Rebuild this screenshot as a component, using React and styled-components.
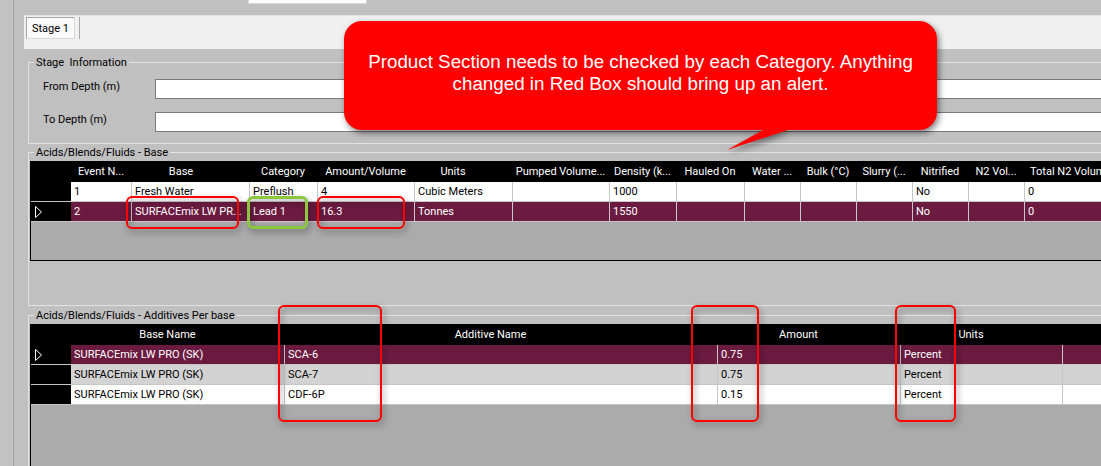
import React from 'react';
import styled, { createGlobalStyle } from 'styled-components';

const GlobalStyle = createGlobalStyle`
  html, body { margin: 0; padding: 0; background: #c0c0c0; }
  body { font-family: Roboto, "Liberation Sans", Arial, sans-serif; font-size: 11px; color: #000; }
  * { box-sizing: border-box; }
`;

const Screen = styled.div`
  position: relative;
  width: 1101px;
  height: 466px;
  overflow: hidden;
  display: flex;
  background: #c0c0c0;
`;

const Rail = styled.div`
  flex: none;
  width: 14px;
  background: #c3c3c3;
  border-right: 1px solid #a2a2a2;
`;

const Gutter = styled.div`
  flex: none;
  width: 10px;
`;

const Main = styled.div`
  flex: 1;
  min-width: 0;
  display: flex;
  flex-direction: column;
  overflow: hidden;
`;

const TopBar = styled.div`
  flex: none;
  height: 16px;
  padding-left: 224px;
  border-bottom: 1px solid #e4e4e4;
`;

const TopField = styled.div`
  width: 119px;
  height: 4px;
  background: #fff;
  border: 1px solid #d6d6d6;
  border-top: none;
`;

const TabStrip = styled.div`
  flex: none;
  height: 33px;
  background: #f0f0f0;
  display: flex;
  align-items: flex-start;
  gap: 4px;
  padding: 1px 0 0 2px;
`;

const Tab = styled.div`
  width: 49px;
  height: 22px;
  background: #f9f9f9;
  border: 1px solid #dadada;
  border-top-color: #a4a4a4;
  border-left-color: #a4a4a4;
  display: flex;
  align-items: center;
  justify-content: center;
  font-size: 11px;
`;

const TabDivider = styled.div`
  width: 1px;
  height: 22px;
  background: #a8a8a8;
`;

const Content = styled.div`
  display: flex;
  flex-direction: column;
  padding-left: 4px;
`;

const Group = styled.fieldset`
  margin: ${(p) => p.$mt}px -40px 0 0;
  padding: 0;
  min-width: 0;
  border: 1px solid #e2e2e2;
`;

const Legend = styled.legend`
  margin-left: 5px;
  padding: 0 2px;
  font-size: 11px;
  line-height: 13px;
  color: #000;
`;

const FieldGrid = styled.div`
  display: grid;
  grid-template-columns: 112px 1fr;
  row-gap: 13px;
  align-items: start;
  padding: 10px 0 11px 14px;
`;

const FieldLabel = styled.label`
  line-height: 13px;
  padding-top: 1px;
  font-size: 11px;
`;

const TextBox = styled.input`
  height: 20px;
  width: 100%;
  margin: 0;
  background: #fff;
  border: 1px solid #7a7a7a;
  outline: none;
  font: inherit;
`;

const GridArea = styled.div`
  padding: 2px 0 ${(p) => p.$pb}px 1px;
`;

const GridFrame = styled.div`
  height: ${(p) => p.$h}px;
  border: 1px solid #000;
  background: #ababab;
  overflow: hidden;
`;

const Row = styled.div`
  display: grid;
  grid-template-columns: ${(p) => p.$cols};
  width: max-content;
  height: ${(p) => (p.$header ? 20 : 20)}px;
  background: ${(p) =>
    p.$header ? '#000' : p.$variant === 'sel' ? '#6b1b40' : p.$variant === 'alt' ? '#d3d3d3' : '#fff'};
  color: ${(p) => (p.$header || p.$variant === 'sel' ? '#fff' : '#000')};
  border-bottom: ${(p) => (p.$header ? 'none' : '1px solid #c6c6c6')};
`;

const RowHead = styled.div`
  background: #000;
  display: flex;
  align-items: center;
  padding-left: 4px;
`;

const HeadCell = styled.div`
  line-height: 20px;
  text-align: ${(p) => (p.$left ? 'left' : 'center')};
  padding: 0 ${(p) => p.$shift || 0}px 0 ${(p) => (p.$left ? 6 : 0)}px;
  white-space: nowrap;
  overflow: hidden;
  font-size: 11px;
`;

const Cell = styled.div`
  line-height: 19px;
  padding-left: 3px;
  border-left: ${(p) => (p.$first ? 'none' : '1px solid #c6c6c6')};
  white-space: nowrap;
  overflow: hidden;
  font-size: 11px;
`;

const Mark = styled.div`
  position: absolute;
  left: ${(p) => p.$x}px;
  top: ${(p) => p.$y}px;
  width: ${(p) => p.$w}px;
  height: ${(p) => p.$h}px;
  border: ${(p) => (p.$green ? '3px solid #8cc63f' : '2px solid #ff0000')};
  border-radius: 6px;
  filter: drop-shadow(2px 3px 3px rgba(0, 0, 0, 0.45));
  pointer-events: none;
`;

const Callout = styled.div`
  position: absolute;
  left: 344px;
  top: 21px;
  width: 593px;
  height: 130px;
`;

const BubbleShape = styled.svg`
  position: absolute;
  inset: 0;
  overflow: visible;
  filter: drop-shadow(2px 3px 3px rgba(0, 0, 0, 0.5));
`;

const CalloutText = styled.p`
  position: relative;
  margin: 0;
  padding-top: 30px;
  text-align: center;
  font-family: "Liberation Sans", Arial, sans-serif;
  font-size: 18.8px;
  line-height: 22px;
  color: #fff;
`;

const Arrow = () => (
  <svg width="7" height="12" viewBox="0 0 7 12">
    <polygon points="0.5,0.5 6.5,6 0.5,11.5" fill="none" stroke="#fff" strokeWidth="1" />
  </svg>
);

const baseCols = '40px 60px 118px 68px 97px 98px 97px 67px 68px 56px 56px 56px 56px 56px 140px';
const baseHead = [
  { t: 'Event N...' },
  { t: 'Base', s: 18 },
  { t: 'Category' },
  { t: 'Amount/Volume' },
  { t: 'Units', s: 20 },
  { t: 'Pumped Volume...' },
  { t: 'Density (k...' },
  { t: 'Hauled On' },
  { t: 'Water  ...' },
  { t: 'Bulk  (\u00B0C)' },
  { t: 'Slurry  (...' },
  { t: 'Nitrified' },
  { t: 'N2 Vol...' },
  { t: 'Total N2 Volume', left: true },
];
const baseRows = [
  { v: 'plain', c: ['1', 'Fresh Water', 'Preflush', '4', 'Cubic Meters', '', '1000', '', '', '', '', 'No', '', '0'] },
  { v: 'sel', sel: true, c: ['2', 'SURFACEmix LW PR...', 'Lead 1', '16.3', 'Tonnes', '', '1550', '', '', '', '', 'No', '', '0'] },
];

const addCols = '40px 213px 433px 183px 162px 120px';
const addHead = [
  { t: 'Base Name', s: 20 },
  { t: 'Additive Name', s: 20 },
  { t: 'Amount', s: 20 },
  { t: 'Units', s: 20 },
  { t: '' },
];
const addRows = [
  { v: 'sel', sel: true, c: ['SURFACEmix LW PRO (SK)', 'SCA-6', '0.75', 'Percent', ''] },
  { v: 'alt', c: ['SURFACEmix LW PRO (SK)', 'SCA-7', '0.75', 'Percent', ''] },
  { v: 'plain', c: ['SURFACEmix LW PRO (SK)', 'CDF-6P', '0.15', 'Percent', ''] },
];

const DataGrid = ({ cols, head, rows, height }) => (
  <GridFrame $h={height}>
    <Row $cols={cols} $header>
      <RowHead />
      {head.map((h, i) => (
        <HeadCell key={i} $shift={h.s} $left={h.left}>
          {h.t}
        </HeadCell>
      ))}
    </Row>
    {rows.map((r, i) => (
      <Row key={i} $cols={cols} $variant={r.v}>
        <RowHead>{r.sel ? <Arrow /> : null}</RowHead>
        {r.c.map((c, j) => (
          <Cell key={j} $first={j === 0}>
            {c}
          </Cell>
        ))}
      </Row>
    ))}
  </GridFrame>
);

export default function App() {
  return (
    <>
      <GlobalStyle />
      <Screen>
        <Rail />
        <Gutter />
        <Main>
          <TopBar>
            <TopField />
          </TopBar>
          <TabStrip>
            <Tab>Stage 1</Tab>
            <TabDivider />
          </TabStrip>
          <Content>
            <Group $mt={7}>
              <Legend>Stage&nbsp; Information</Legend>
              <FieldGrid>
                <FieldLabel>From Depth (m)</FieldLabel>
                <TextBox readOnly defaultValue="" />
                <FieldLabel>To Depth (m)</FieldLabel>
                <TextBox readOnly defaultValue="" />
              </FieldGrid>
            </Group>
            <Group $mt={2}>
              <Legend>Acids/Blends/Fluids - Base</Legend>
              <GridArea $pb={44}>
                <DataGrid cols={baseCols} head={baseHead} rows={baseRows} height={100} />
              </GridArea>
            </Group>
            <Group $mt={3}>
              <Legend>Acids/Blends/Fluids - Additives Per base</Legend>
              <GridArea $pb={0}>
                <DataGrid cols={addCols} head={addHead} rows={addRows} height={200} />
              </GridArea>
            </Group>
          </Content>
        </Main>

        <Mark $x={126} $y={196} $w={113} $h={33} />
        <Mark $x={247} $y={196} $w={61} $h={33} $green />
        <Mark $x={317} $y={196} $w={88} $h={33} />
        <Mark $x={278} $y={305} $w={104} $h={117} />
        <Mark $x={691} $y={305} $w={68} $h={117} />
        <Mark $x={895} $y={305} $w={61} $h={117} />

        <Callout>
          <BubbleShape width="593" height="130" viewBox="0 0 593 130">
            <path
              d="M18,0 H575 A18,18 0 0 1 593,18 V91 A18,18 0 0 1 575,109 H444 L383,129 L419,109 H18 A18,18 0 0 1 0,91 V18 A18,18 0 0 1 18,0 Z"
              fill="#ff0000"
            />
          </BubbleShape>
          <CalloutText>
            Product Section needs to be checked by each Category. Anything
            <br />
            changed in Red Box should bring up an alert.
          </CalloutText>
        </Callout>
      </Screen>
    </>
  );
}
